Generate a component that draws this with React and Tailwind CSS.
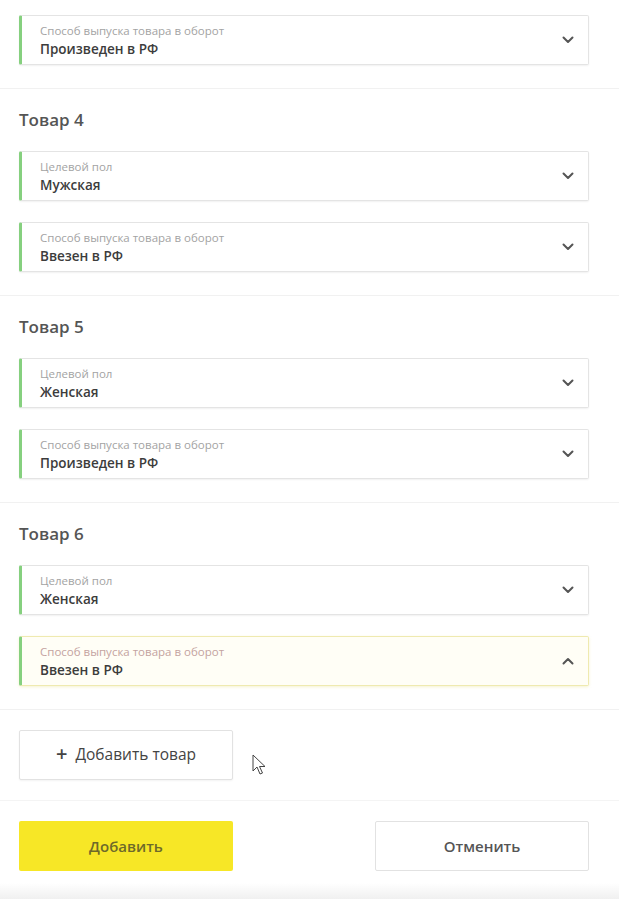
import React from "react";

function Chevron({ up }) {
  return (
    <svg width="12" height="8" viewBox="0 0 12 8" className="shrink-0">
      <path
        d={up ? "M1.5 6.5 L6 2 L10.5 6.5" : "M1.5 1.5 L6 6 L10.5 1.5"}
        fill="none"
        stroke="#555"
        strokeWidth="2"
        strokeLinecap="round"
        strokeLinejoin="round"
      />
    </svg>
  );
}

function Field({ label, value, focused }) {
  return (
    <div
      className={
        "flex items-center h-[50px] border border-l-[3px] border-l-[#86d07f] rounded-[2px] pl-[18px] pr-[14px] " +
        (focused
          ? "border-[#efeab0] bg-[#fffef6] shadow-[0_1px_3px_rgba(230,220,120,0.35)]"
          : "border-[#e4e4e4] bg-white shadow-[0_1px_2px_rgba(0,0,0,0.06)]")
      }
    >
      <div className="flex-1 flex flex-col pt-[2px]">
        <span
          className={
            "text-[11.5px] leading-[14px] " +
            (focused ? "text-[#c4a3a0]" : "text-[#a3a3a3]")
          }
        >
          {label}
        </span>
        <span className="text-[13.5px] leading-[18px] font-semibold text-[#3c3c3c] mt-[2px]">
          {value}
        </span>
      </div>
      <Chevron up={focused} />
    </div>
  );
}

function Section({ title, children }) {
  return (
    <div className="pl-[19px] pr-[30px] pt-[19px] pb-[23px] border-b border-[#f1f1f1]">
      {title && (
        <div className="text-[17px] leading-[24px] text-[#555] font-semibold mb-[19px]">
          {title}
        </div>
      )}
      <div className="flex flex-col gap-[21px]">{children}</div>
    </div>
  );
}

export default function App() {
  return (
    <div
      className="w-[619px] h-[899px] bg-white overflow-hidden relative"
      style={{ fontFamily: '"Open Sans", "Noto Sans", sans-serif' }}
    >
      <div className="pl-[19px] pr-[30px] pt-[15px] pb-[23px] border-b border-[#f1f1f1]">
        <Field label="Способ выпуска товара в оборот" value="Произведен в РФ" />
      </div>
      <Section title="Товар 4">
        <Field label="Целевой пол" value="Мужская" />
        <Field label="Способ выпуска товара в оборот" value="Ввезен в РФ" />
      </Section>
      <Section title="Товар 5">
        <Field label="Целевой пол" value="Женская" />
        <Field label="Способ выпуска товара в оборот" value="Произведен в РФ" />
      </Section>
      <Section title="Товар 6">
        <Field label="Целевой пол" value="Женская" />
        <Field label="Способ выпуска товара в оборот" value="Ввезен в РФ" focused />
      </Section>
      <div className="pl-[19px] pr-[30px] pt-[20px] pb-[20px] border-b border-[#f4f4f4]">
        <button className="w-[214px] h-[50px] border border-[#e2e2e2] rounded-[2px] bg-white flex items-center justify-center gap-[8px] text-[15.5px] text-[#444] shadow-[0_1px_2px_rgba(0,0,0,0.05)]">
          <span className="text-[20px] leading-none font-semibold -mt-[2px]">+</span>
          <span>Добавить товар</span>
        </button>
      </div>
      <div className="pl-[19px] pr-[30px] pt-[20px] flex justify-between">
        <button className="w-[214px] h-[50px] bg-[#f7e726] rounded-[2px] text-[15px] font-semibold text-[#6e6a2a]">
          Добавить
        </button>
        <button className="w-[214px] h-[50px] border border-[#e2e2e2] rounded-[2px] bg-white text-[15px] font-semibold text-[#555]">
          Отменить
        </button>
      </div>
      <div className="absolute left-0 right-0 bottom-0 h-[16px] bg-gradient-to-b from-white to-[#f0f0f0]" />
      <svg
        className="absolute left-[252px] top-[754px]"
        width="14"
        height="22"
        viewBox="0 0 14 22"
      >
        <path
          d="M1 1 L1 17 L5 13 L8 20 L10.5 19 L7.5 12.5 L13 12.5 Z"
          fill="white"
          stroke="#444"
          strokeWidth="1"
          strokeLinejoin="round"
        />
      </svg>
    </div>
  );
}
